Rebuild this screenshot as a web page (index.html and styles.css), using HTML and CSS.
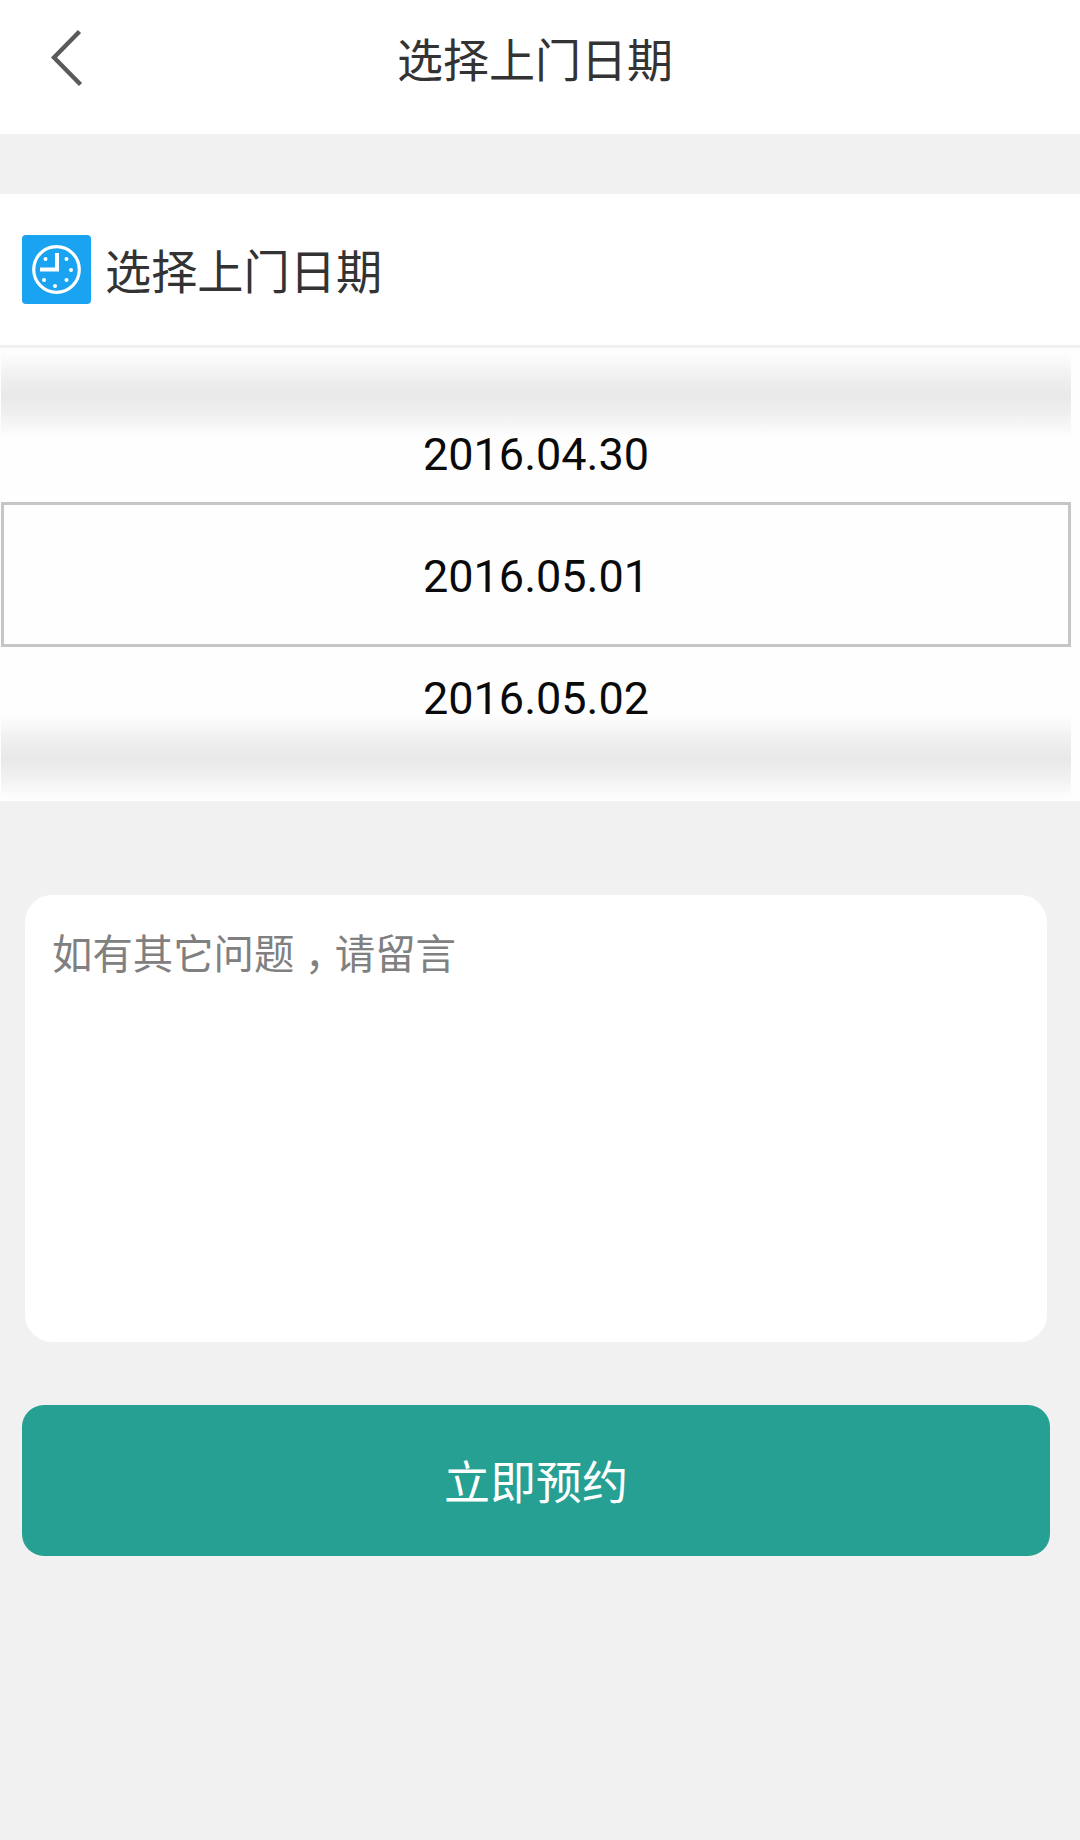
FILE: index.html
```html
<!DOCTYPE html>
<html lang="zh-CN">
  <head>
    <meta charset="UTF-8" />
    <meta name="viewport" content="width=device-width, initial-scale=1.0" />
    <title>选择上门日期</title>
    <link rel="stylesheet" href="styles.css">
  </head>
  <body>
    <div class="navbar">
      <a class="back" href="#">
        <svg width="34" height="60" viewBox="0 0 34 60">
          <path d="M29.5 3.5 L4 29.5 L30.5 56.5" fill="none" stroke="#5a5a5a" stroke-width="4.4" />
        </svg>
      </a>
      <h1>选择上门日期</h1>
    </div>

    <div class="section-title">
      <svg class="clock" width="69" height="69" viewBox="0 0 69 69">
        <rect width="69" height="69" rx="4" fill="#1aa3f0" />
        <circle cx="34.5" cy="34.5" r="22.8" fill="none" stroke="#fff" stroke-width="3.2" />
        <path d="M35 18 V34.5 H18" fill="none" stroke="#fff" stroke-width="4" />
        <g fill="#fff">
          <circle cx="23.5" cy="24" r="2" />
          <circle cx="44.5" cy="24" r="2" />
          <circle cx="49" cy="35" r="2" />
          <circle cx="44.5" cy="45" r="2" />
          <circle cx="33" cy="51" r="2" />
          <circle cx="22" cy="45" r="2" />
        </g>
      </svg>
      <h2>选择上门日期</h2>
    </div>

    <!-- date wheel -->
    <div class="wheel">
      <div class="shade"></div>
      <div class="date">2016.04.30</div>
      <div class="date selected">2016.05.01</div>
      <div class="date">2016.05.02</div>
      <div class="shade shade-bottom"></div>
    </div>

    <form class="booking">
      <div class="message" contenteditable="true">如有其它问题<span class="comma" lang="zh-TW">，</span>请留言</div>
      <button type="button">立即预约</button>
    </form>
  </body>
</html>
```
FILE: styles.css
```css
* {
  box-sizing: border-box;
}
body {
  font-family: Roboto, "Noto Sans CJK SC", sans-serif;
  margin: 0;
  background-color: #f1f1f1;
  color: #333;
}
h1,
h2 {
  margin: 0;
  font-size: 46px;
  font-weight: normal;
  line-height: 60px;
}
.navbar {
  display: grid;
  grid-template-columns: 100px 1fr 110px;
  height: 134px;
  padding-top: 28px;
  background-color: white;
}
.navbar h1 {
  padding-top: 3px;
  text-align: center;
}
.back {
  padding-left: 50px;
}
.back svg {
  display: block;
}
.section-title {
  display: flex;
  align-items: center;
  gap: 14px;
  height: 154px;
  margin-top: 60px;
  padding: 0 22px;
  background-color: white;
  border-bottom: 3px solid #f0f0f0;
}
.section-title h2 {
  padding-top: 6px;
  font-size: 46.2px;
}
.wheel {
  height: 453px;
  padding: 0 9px 0 1px;
  background-color: #fefefe;
  color: #0a0a0a;
}
.shade {
  height: 90px;
  background: linear-gradient(#fefefe 5%, #ededed 38%, #e9e9e9 54%, #eee 70%, #fefefe);
}
.shade-bottom {
  height: 88px;
  margin-top: -5px;
}
.date {
  height: 64px;
  font-size: 45px;
  line-height: 34px;
  text-align: center;
}
.selected {
  height: 145px;
  border: 3px solid #c6c6c6;
  line-height: 143px;
}
.selected + .date {
  height: 69px;
  line-height: 104px;
}
.booking {
  padding: 94px 30px 0 22px;
}
.message {
  height: 447px;
  margin: 0 3px;
  padding: 31px 27px;
  background-color: white;
  border-radius: 27px;
  color: #808080;
  font-size: 40.4px;
  line-height: 60px;
}
/* centred comma, lowered to the baseline */
.comma {
  font-family: "Noto Sans CJK TC", sans-serif;
  line-height: 0;
  vertical-align: -13px;
}
button {
  display: block;
  width: 100%;
  height: 151px;
  margin-top: 63px;
  padding: 0 0 3px;
  border: none;
  border-radius: 22px;
  background-color: #26a092;
  color: white;
  font-family: inherit;
  font-size: 46px;
}
```
